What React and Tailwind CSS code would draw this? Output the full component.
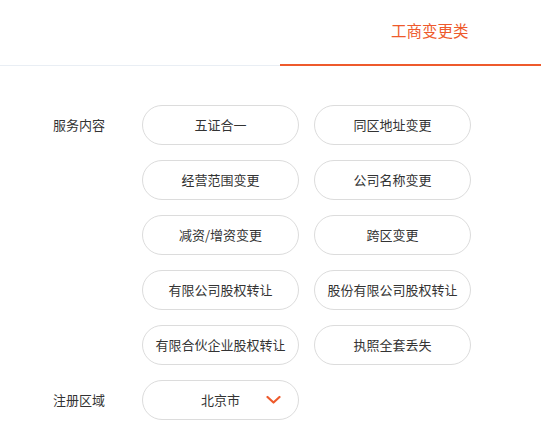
import React from 'react';

const services = [
  '五证合一',
  '同区地址变更',
  '经营范围变更',
  '公司名称变更',
  '减资/增资变更',
  '跨区变更',
  '有限公司股权转让',
  '股份有限公司股权转让',
  '有限合伙企业股权转让',
  '执照全套丢失',
];

const Pill = ({ children }) => (
  <button className="relative w-[157px] h-[40px] rounded-full border border-[#dcdcdc] bg-white text-[13px] text-[#333] flex items-center justify-center">
    {children}
  </button>
);

const App = () => {
  return (
    <div
      className="w-[541px] h-[447px] bg-white overflow-hidden"
      style={{ fontFamily: '"Noto Sans CJK SC", "Noto Sans", sans-serif' }}
    >
      {/* tab bar */}
      <div className="flex h-[66px]">
        <div className="flex-1 border-b border-[#e9eef4]" />
        <div className="w-[261px] border-b-2 border-[#ee5a2c] flex items-center pl-[111px] pb-[2px]">
          <span className="text-[15.5px] text-[#ee5a2c]">工商变更类</span>
        </div>
      </div>

      <div className="pl-[53px] pt-[39px]">
        <div className="flex items-start">
          <div className="w-[89px] h-[40px] flex items-center text-[13px] text-[#333]">服务内容</div>
          <div className="grid grid-cols-[157px_157px] gap-x-[15px] gap-y-[15px]">
            {services.map((s) => (
              <Pill key={s}>{s}</Pill>
            ))}
          </div>
        </div>

        <div className="flex items-center mt-[15px]">
          <div className="w-[89px] text-[13px] text-[#333]">注册区域</div>
          <Pill>
            北京市
            <svg
              className="absolute right-[17px] top-1/2 -translate-y-1/2"
              width="15"
              height="9"
              viewBox="0 0 15 9"
              fill="none"
            >
              <polyline points="1.5,1.5 7.5,7 13.5,1.5" stroke="#ee5a2c" strokeWidth="2.2" strokeLinecap="round" strokeLinejoin="round" />
            </svg>
          </Pill>
        </div>
      </div>
    </div>
  );
};

export default App;
